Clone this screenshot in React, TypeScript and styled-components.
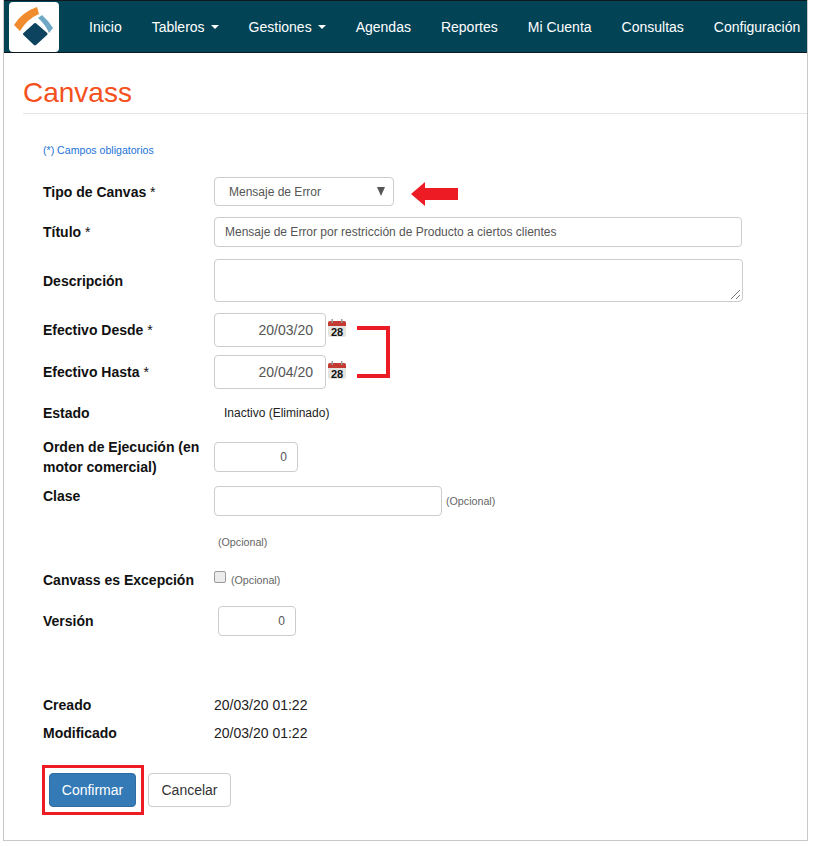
import React from 'react';
import styled, { createGlobalStyle } from 'styled-components';

const GlobalStyle = createGlobalStyle`
  html, body { margin: 0; padding: 0; background: #fff; }
  body { font-family: "Liberation Sans", Arial, sans-serif; font-size: 14px; color: #333; }
`;

const Frame = styled.div`
  box-sizing: border-box;
  width: 805px;
  height: 841px;
  margin-left: 3px;
  border: 1px solid #c8c8c8;
  border-top: 0;
`;

const Navbar = styled.nav`
  box-sizing: border-box;
  height: 53px;
  background: #024356;
  border-top: 1px solid #0c1a20;
  border-bottom: 1px solid #0c1a20;
  display: flex;
  align-items: center;
  padding-left: 5px;
`;

const LogoBox = styled.div`
  width: 50px;
  height: 50px;
  flex: none;
  background: #fff;
  border-radius: 4px;
`;

const NavList = styled.div`
  display: flex;
  margin-left: 15px;
`;

const NavItem = styled.a`
  color: #fff;
  font-size: 14px;
  line-height: 20px;
  padding: 0 15px;
  white-space: nowrap;
  display: flex;
  align-items: center;
`;

const Caret = styled.span`
  width: 0;
  height: 0;
  margin-left: 6px;
  margin-top: 1px;
  border-top: 4px solid #fff;
  border-left: 4px solid transparent;
  border-right: 4px solid transparent;
`;

const PageHeader = styled.div`
  height: 60px;
  border-bottom: 1px solid #e4e4e4;
  margin-left: 19px;
`;

const Title = styled.h1`
  margin: 0;
  padding-top: 23px;
  font-size: 28px;
  line-height: 34px;
  font-weight: 400;
  color: #f4511e;
`;

const Form = styled.div`
  padding: 29px 0 0 39px;
`;

const Required = styled.div`
  font-size: 10.6px;
  line-height: 14px;
  color: #1a73d8;
  margin-bottom: 20px;
`;

const Row = styled.div<{ $h: number; $gap?: number; $top?: boolean }>`
  display: flex;
  align-items: ${p => (p.$top ? 'flex-start' : 'center')};
  height: ${p => p.$h}px;
  margin-bottom: ${p => p.$gap ?? 0}px;
`;

const Label = styled.label`
  width: 171px;
  flex: none;
  font-weight: 700;
  font-size: 14px;
  line-height: 20px;
  color: #111;
`;

const Star = styled.span`
  font-weight: 400;
`;

const Control = styled.div<{ $w: number; $h: number; $right?: boolean; $ml?: number; $mt?: number }>`
  box-sizing: border-box;
  width: ${p => p.$w}px;
  height: ${p => p.$h}px;
  flex: none;
  margin-left: ${p => p.$ml ?? 0}px;
  margin-top: ${p => p.$mt ?? 0}px;
  background: #fff;
  border: 1px solid #ccc;
  border-radius: 4px;
  font-size: 12px;
  color: #555;
  padding: 0 10px;
  display: flex;
  align-items: center;
  justify-content: ${p => (p.$right ? 'flex-end' : 'flex-start')};
`;

const SelectBox = styled(Control)`
  padding: 0 8px 0 14px;
  justify-content: space-between;
`;

const SelectArrow = styled.span`
  width: 0;
  height: 0;
  border-top: 9px solid #555;
  border-left: 4.5px solid transparent;
  border-right: 4.5px solid transparent;
`;

const DateBox = styled(Control)`
  font-size: 14px;
  padding-right: 12px;
`;

const TextAreaBox = styled(Control)`
  position: relative;
`;

const ResizeGrip = styled.svg`
  position: absolute;
  right: 1px;
  bottom: 1px;
`;

const DateGroup = styled.div`
  position: relative;
`;

const Optional = styled.span<{ $ml?: number }>`
  font-size: 10.7px;
  line-height: 30px;
  color: #666;
  margin-left: ${p => p.$ml ?? 0}px;
`;

const Value = styled.span<{ $ml?: number }>`
  font-size: 14px;
  color: #222;
  margin-left: ${p => p.$ml ?? 0}px;
`;

const SmallValue = styled(Value)`
  font-size: 12px;
`;

const CheckBox = styled.span`
  box-sizing: border-box;
  width: 12px;
  height: 12px;
  flex: none;
  margin-top: -6px;
  background: #ececec;
  border: 1px solid #9a9a9a;
  border-radius: 2px;
`;

const Actions = styled.div`
  display: flex;
  align-items: center;
  gap: 12px;
  margin: 28px 0 0 6px;
`;

const ConfirmWrap = styled.div`
  position: relative;
  display: flex;

  /* red annotation round the button */
  &::after {
    content: '';
    position: absolute;
    top: -8px;
    bottom: -8px;
    left: -7px;
    right: -8px;
    border: 3px solid #ed1c24;
  }
`;

const Button = styled.button<{ $primary?: boolean }>`
  box-sizing: border-box;
  height: 34px;
  padding: 0;
  width: ${p => (p.$primary ? 87 : 83)}px;
  font-family: inherit;
  font-size: 14px;
  border-radius: 4px;
  border: 1px solid ${p => (p.$primary ? '#2e6da4' : '#ccc')};
  background: ${p => (p.$primary ? '#337ab7' : '#fff')};
  color: ${p => (p.$primary ? '#fff' : '#333')};
`;

const CalendarSvg = styled.svg`
  margin: -3px 0 0 1px;
  flex: none;
`;

const ArrowSvg = styled.svg`
  margin: 4px 0 0 17px;
  flex: none;
`;

const BracketSvg = styled.svg`
  position: absolute;
  left: 314px;
  top: 13px;
`;

const Logo = () => (
  <svg width="50" height="50" viewBox="0 0 50 50">
    <path d="M5 23 Q13 10 28 5 L30 12 Q18 17 11 29 Z" fill="#f08c2e" />
    <path d="M33 13 Q39 18 44 26 L40 31 Q36 22 29 16 Z" fill="#6fa8c6" />
    <path
      d="M26 22.5 L37 32 L26 42 L15.5 32 Z"
      fill="#0d435e"
      stroke="#0d435e"
      strokeWidth="3"
      strokeLinejoin="round"
    />
  </svg>
);

const Calendar = () => (
  <CalendarSvg width="20" height="20" viewBox="0 0 20 20">
    <rect x="1" y="2" width="18" height="16" rx="2" fill="#e4e4e0" />
    <path d="M1 7 V4 a2 2 0 0 1 2 -2 H17 a2 2 0 0 1 2 2 V7 Z" fill="#c23a32" />
    <rect x="4.5" y="0" width="1.5" height="4" fill="#999" />
    <rect x="14" y="0" width="1.5" height="4" fill="#999" />
    <text
      x="10"
      y="16.5"
      textAnchor="middle"
      fontSize="11"
      fontWeight="700"
      fontFamily="Liberation Sans, sans-serif"
      fill="#111"
    >
      28
    </text>
  </CalendarSvg>
);

const App: React.FC = () => (
  <>
    <GlobalStyle />
    <Frame>
      <Navbar>
        <LogoBox>
          <Logo />
        </LogoBox>
        <NavList>
          <NavItem>Inicio</NavItem>
          <NavItem>Tableros<Caret /></NavItem>
          <NavItem>Gestiones<Caret /></NavItem>
          <NavItem>Agendas</NavItem>
          <NavItem>Reportes</NavItem>
          <NavItem>Mi Cuenta</NavItem>
          <NavItem>Consultas</NavItem>
          <NavItem>Configuración</NavItem>
        </NavList>
      </Navbar>
      <PageHeader>
        <Title>Canvass</Title>
      </PageHeader>
      <Form>
        <Required>(*) Campos obligatorios</Required>
        <Row $h={29} $gap={11}>
          <Label>Tipo de Canvas <Star>*</Star></Label>
          <SelectBox $w={180} $h={29}>
            Mensaje de Error
            <SelectArrow />
          </SelectBox>
          <ArrowSvg width="47" height="24" viewBox="0 0 47 24">
            <path d="M0 12 L14 0 V6 H47 V18 H14 V24 Z" fill="#ed1c24" />
          </ArrowSvg>
        </Row>
        <Row $h={30} $gap={12}>
          <Label>Título <Star>*</Star></Label>
          <Control $w={528} $h={30}>Mensaje de Error por restricción de Producto a ciertos clientes</Control>
        </Row>
        <Row $h={43} $gap={11}>
          <Label>Descripción</Label>
          <TextAreaBox $w={529} $h={43}>
            <ResizeGrip width="11" height="11" viewBox="0 0 11 11">
              <path d="M1 10 L10 1 M6 10 L10 6" stroke="#777" strokeWidth="1" />
            </ResizeGrip>
          </TextAreaBox>
        </Row>
        <DateGroup>
          <Row $h={34} $gap={8}>
            <Label>Efectivo Desde <Star>*</Star></Label>
            <DateBox $w={112} $h={34} $right>20/03/20</DateBox>
            <Calendar />
          </Row>
          <Row $h={34} $gap={8}>
            <Label>Efectivo Hasta <Star>*</Star></Label>
            <DateBox $w={112} $h={34} $right>20/04/20</DateBox>
            <Calendar />
          </Row>
          <BracketSvg width="33" height="52" viewBox="0 0 33 52">
            <path d="M0 2 H31 V50 H0" fill="none" stroke="#ed1c24" strokeWidth="4" />
          </BracketSvg>
        </DateGroup>
        <Row $h={32} $gap={8}>
          <Label>Estado</Label>
          <SmallValue $ml={10}>Inactivo (Eliminado)</SmallValue>
        </Row>
        <Row $h={49} $top>
          <Label>Orden de Ejecución (en motor comercial)</Label>
          <Control $w={84} $h={30} $mt={5} $right>0</Control>
        </Row>
        <Row $h={44} $top>
          <Label>Clase</Label>
          <Control $w={228} $h={30} />
          <Optional $ml={4}>(Opcional)</Optional>
        </Row>
        <Row $h={24} $gap={14}>
          <Label />
          <Optional $ml={4}>(Opcional)</Optional>
        </Row>
        <Row $h={24} $gap={14}>
          <Label>Canvass es Excepción</Label>
          <CheckBox />
          <Optional $ml={5}>(Opcional)</Optional>
        </Row>
        <Row $h={30} $gap={57}>
          <Label>Versión</Label>
          <Control $w={78} $h={30} $ml={4} $right>0</Control>
        </Row>
        <Row $h={24} $gap={4}>
          <Label>Creado</Label>
          <Value>20/03/20 01:22</Value>
        </Row>
        <Row $h={24}>
          <Label>Modificado</Label>
          <Value>20/03/20 01:22</Value>
        </Row>
        <Actions>
          <ConfirmWrap>
            <Button $primary>Confirmar</Button>
          </ConfirmWrap>
          <Button>Cancelar</Button>
        </Actions>
      </Form>
    </Frame>
  </>
);

export default App;
